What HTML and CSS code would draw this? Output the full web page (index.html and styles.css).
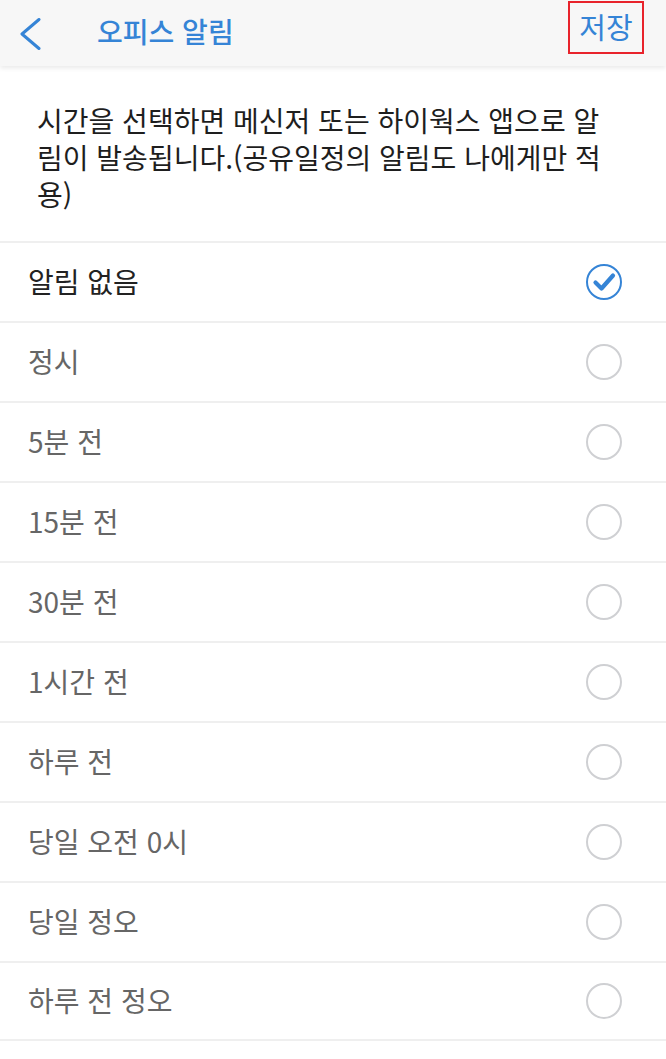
FILE: index.html
```html
<!DOCTYPE html>
<html lang="ko">
<head>
<meta charset="utf-8">
<link rel="stylesheet" href="styles.css">
</head>
<body>
<header class="topbar">
  <div class="back">
    <svg width="24" height="32" viewBox="0 0 24 32"><path d="M21 1.5 L4 16 L21 30.5" fill="none" stroke="#3584d6" stroke-width="3" stroke-linecap="round" stroke-linejoin="round"/></svg>
  </div>
  <div class="title">오피스 알림</div>
  <div class="save">저장</div>
</header>
<p class="desc">시간을 선택하면 메신저 또는 하이웍스 앱으로 알림이 발송됩니다.(공유일정의 알림도 나에게만 적용)</p>
<ul class="list">
  <li class="row selected"><span>알림 없음</span>
    <svg class="radio" width="38" height="38" viewBox="0 0 38 38"><circle cx="19" cy="19" r="17" fill="none" stroke="#3584d6" stroke-width="2"/><path d="M10.5 19.5 L16.5 25.5 L28 12.5" fill="none" stroke="#3584d6" stroke-width="4.2" stroke-linecap="round" stroke-linejoin="round"/></svg>
  </li>
  <li class="row"><span>정시</span><i class="circle"></i></li>
  <li class="row"><span>5분 전</span><i class="circle"></i></li>
  <li class="row"><span>15분 전</span><i class="circle"></i></li>
  <li class="row"><span>30분 전</span><i class="circle"></i></li>
  <li class="row"><span>1시간 전</span><i class="circle"></i></li>
  <li class="row"><span>하루 전</span><i class="circle"></i></li>
  <li class="row"><span>당일 오전 0시</span><i class="circle"></i></li>
  <li class="row"><span>당일 정오</span><i class="circle"></i></li>
  <li class="row last"><span>하루 전 정오</span><i class="circle"></i></li>
</ul>
</body>
</html>
```

FILE: styles.css
```css
* { box-sizing: border-box; }
html, body { margin: 0; padding: 0; background: #fff; }
body {
  font-family: "Noto Sans CJK KR", "Noto Sans", sans-serif;
  width: 666px;
  overflow: hidden;
}
.topbar {
  height: 66px;
  background: #f7f7f7;
  display: flex;
  align-items: center;
  position: relative;
  box-shadow: 0 2px 5px rgba(0,0,0,0.09);
  padding-left: 18px;
}
.back { width: 24px; height: 32px; display: flex; margin-top: 2px; }
.title {
  margin-left: 55px;
  font-size: 28px;
  color: #3584d6;
  font-weight: 500;
  margin-top: -4px;
}
.save {
  margin-left: auto;
  margin-right: 22px;
  align-self: flex-start;
  margin-top: 1px;
  height: 53px;
  width: 76px;
  border: 2px solid #e8232b;
  color: #3584d6;
  font-size: 29px;
  display: flex;
  align-items: center;
  justify-content: center;
  padding-bottom: 4px;
}
.desc {
  margin: 0;
  padding: 36px 49px 28px 37px;
  font-size: 28px;
  line-height: 37px;
  color: #1e1e1e;
}
.list { list-style: none; margin: 0; padding: 0; }
.row {
  height: 80px;
  border-top: 2px solid #efefef;
  display: flex;
  align-items: center;
  justify-content: space-between;
  padding: 0 44px 0 28px;
  font-size: 28px;
  color: #666;
}
.row.last { border-bottom: 2px solid #efefef; }
.row.selected { color: #222; }
.row span { margin-top: -2px; }
.radio { margin-right: -1px; }
.circle {
  width: 36px;
  height: 36px;
  border: 2px solid #cfd0d3;
  border-radius: 50%;
}
```
